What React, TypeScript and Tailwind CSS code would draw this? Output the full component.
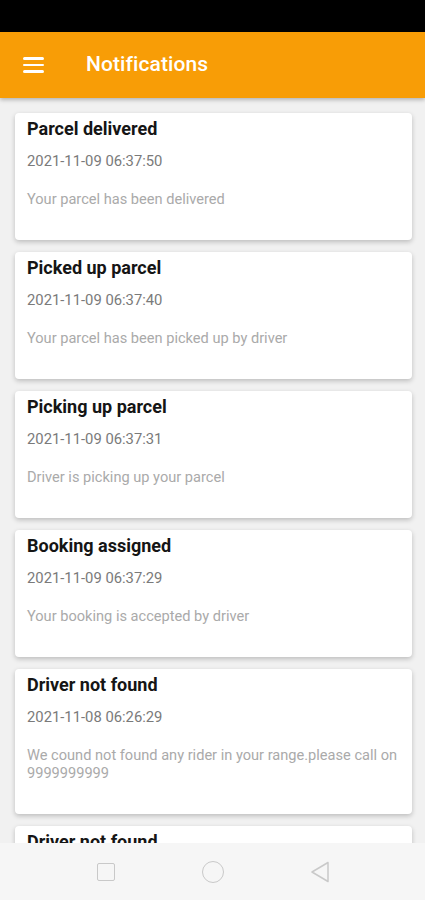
const items = [
  { title: "Parcel delivered", date: "2021-11-09 06:37:50", body: "Your parcel has been delivered" },
  { title: "Picked up parcel", date: "2021-11-09 06:37:40", body: "Your parcel has been picked up by driver" },
  { title: "Picking up parcel", date: "2021-11-09 06:37:31", body: "Driver is picking up your parcel" },
  { title: "Booking assigned", date: "2021-11-09 06:37:29", body: "Your booking is accepted by driver" },
  { title: "Driver not found", date: "2021-11-08 06:26:29", body: "We cound not found any rider in your range.please call on 9999999999" },
  { title: "Driver not found", date: "2021-11-08 06:26:29", body: "We cound not found any rider in your range.please call on 9999999999" },
];

export default function App() {
  return (
    <div className="h-[900px] w-[425px] flex flex-col bg-[#f1f1f1] overflow-hidden" style={{ fontFamily: "Roboto, 'Noto Sans', sans-serif" }}>
      <div className="h-[32px] bg-black shrink-0" />
      <header className="h-[66px] bg-[#f89d06] flex items-center shrink-0 shadow-[0_2px_4px_rgba(0,0,0,0.25)] z-10">
        <div className="ml-[23px] w-[21px] flex flex-col gap-[4px]">
          <span className="h-[2.5px] bg-white rounded" />
          <span className="h-[2.5px] bg-white rounded" />
          <span className="h-[2.5px] bg-white rounded" />
        </div>
        <h1 className="ml-[42px] text-white text-[21px] font-medium tracking-[0.1px]">Notifications</h1>
      </header>
      <main className="flex-1 overflow-hidden pl-[15px] pr-[13px] pt-[15px] flex flex-col gap-[12px]">
        {items.map((n, i) => (
          <div key={i} className="bg-white rounded-[4px] shadow-[0_2px_5px_rgba(0,0,0,0.22)] pl-[12px] pr-[6px] pt-[3px] pb-[32px] shrink-0">
            <div className="text-[18px] leading-[26px] font-bold text-[#151515]">{n.title}</div>
            <div className="mt-[8px] text-[14.8px] leading-[22px] text-[#7a7a7a]">{n.date}</div>
            <div className="mt-[18px] text-[14.6px] leading-[18px] text-[#aaaaaa]">{n.body}</div>
          </div>
        ))}
      </main>
      <nav className="h-[57px] bg-[#f6f6f6] flex items-center justify-center shrink-0">
        <div className="w-[107px] flex justify-center">
          <span className="w-[18px] h-[18px] border-[1.5px] border-[#c9c9c9] rounded-[2px]" />
        </div>
        <div className="w-[107px] flex justify-center">
          <span className="w-[22px] h-[22px] border-[1.5px] border-[#c9c9c9] rounded-full" />
        </div>
        <div className="w-[107px] flex justify-center">
          <svg width="20" height="22" viewBox="0 0 20 22" fill="none" stroke="#c9c9c9" strokeWidth="1.5" strokeLinejoin="round">
            <path d="M18 1.5 L2 11 L18 20.5 Z" />
          </svg>
        </div>
      </nav>
    </div>
  );
}
